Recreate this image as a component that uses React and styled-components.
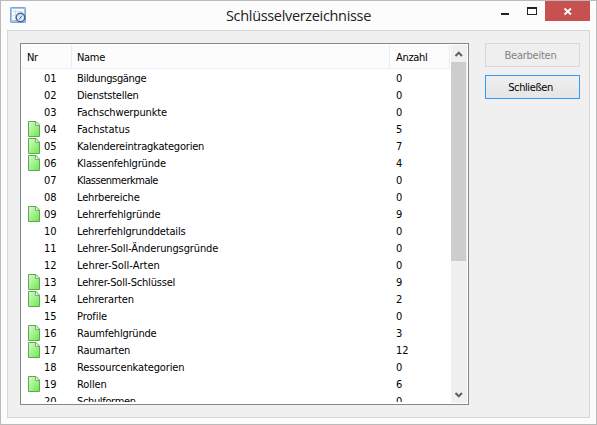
import React from "react";
import styled, { createGlobalStyle } from "styled-components";

const Global = createGlobalStyle`
  * { box-sizing: border-box; }
  body { margin: 0; overflow: hidden; }
`;

const Window = styled.div`
  width: 597px;
  height: 425px;
  display: flex;
  flex-direction: column;
  padding: 0 6px 6px;
  background: #fcfcfc;
  border: 1px solid #bbb;
  color: #000;
  font: 11px/17px "DejaVu Sans Condensed", "DejaVu Sans", sans-serif;
  font-stretch: condensed;
`;

const TitleBar = styled.header`
  height: 29px;
  flex: none;
  display: grid;
  grid-template-columns: 106px 1fr 106px;
`;

const AppIcon = styled.svg`
  width: 16px;
  height: 16px;
  margin: 6px 0 0 3px;
`;

const Title = styled.h1`
  margin: 0;
  padding-top: 4px;
  text-align: center;
  font: 400 14.5px/21px "Open Sans", sans-serif;
  letter-spacing: -0.33px;
  color: #222;
`;

const Controls = styled.div`
  display: flex;
  align-items: flex-start;
  justify-content: flex-end;
`;

const Control = styled.button`
  width: ${(p) => (p.$close ? 45 : 27)}px;
  height: 20px;
  padding: 0;
  border: 0;
  display: flex;
  background: ${(p) => (p.$close ? "#c75050" : "transparent")};
`;

const Client = styled.main`
  flex: 1;
  min-height: 0;
  display: flex;
  gap: 16px;
  padding: 12px 9px 12px 12px;
  background: #f0f0f0;
  border: 1px solid #d6d6d6;
`;

const ListBox = styled.section`
  width: 449px;
  height: 362px;
  display: flex;
  padding: 1px;
  background: #fff;
  border: 1px solid #828790;
`;

const Table = styled.div`
  flex: 1;
  height: 357px;
  overflow: hidden;
`;

const HeaderRow = styled.div`
  height: 24px;
  width: 428px;
  display: grid;
  grid-template-columns: 50px 318px 60px;
  background: #fcfcfc;
  border-bottom: 1px solid #e5effa;
`;

const HeaderCell = styled.div`
  padding: 4px 0 0 ${(p) => p.$inset || 5}px;
  border-right: 1px solid #e5effa;
  letter-spacing: -0.3px;
`;

const Row = styled.div`
  height: 17px;
  display: grid;
  grid-template-columns: 22px 33px 319px 1fr;
`;

const Rows = styled.div`
  padding-top: 1px;
`;

const IconCell = styled.div`
  padding-left: 6px;
  height: 17px;
  display: flex;
`;

const Cell = styled.span`
  white-space: nowrap;
  letter-spacing: ${(p) => p.$tracking || 0}px;
`;

const Scrollbar = styled.div`
  width: 16px;
  height: 358px;
  display: flex;
  flex-direction: column;
  background: #f0f0f0;
`;

const ScrollButton = styled.button`
  height: 17px;
  padding: 0;
  border: 0;
  display: flex;
  background: transparent;
`;

const Thumb = styled.div`
  width: 15px;
  height: 199px;
  margin-bottom: auto;
  background: #cdcdcd;
`;

const Actions = styled.aside`
  flex: 1;
  display: flex;
  flex-direction: column;
  gap: 8px;
`;

const Button = styled.button`
  height: 24px;
  width: 95px;
  padding: 0 4px 0 0;
  font: inherit;
  letter-spacing: ${(p) => (p.disabled ? -0.25 : -0.4)}px;
  color: ${(p) => (p.disabled ? "#838383" : "#000")};
  border: 1px solid ${(p) => (p.disabled ? "#d9d9d9" : "#3399ff")};
  background: ${(p) => (p.disabled ? "#efefef" : "linear-gradient(#f0f0f0, #e5e5e5)")};
`;

// number, name, count, letter spacing of the name
const entries = [
  ["01", "Bildungsgänge", 0, -0.33],
  ["02", "Dienststellen", 0, -0.25],
  ["03", "Fachschwerpunkte", 0, -0.13],
  ["04", "Fachstatus", 5, 0],
  ["05", "Kalendereintragkategorien", 7, -0.2],
  ["06", "Klassenfehlgründe", 4, -0.18],
  ["07", "Klassenmerkmale", 0, -0.48],
  ["08", "Lehrbereiche", 0, -0.17],
  ["09", "Lehrerfehlgründe", 9, -0.13],
  ["10", "Lehrerfehlgrunddetails", 0, -0.18],
  ["11", "Lehrer-Soll-Änderungsgründe", 0, -0.12],
  ["12", "Lehrer-Soll-Arten", 0, 0],
  ["13", "Lehrer-Soll-Schlüssel", 9, -0.19],
  ["14", "Lehrerarten", 2, -0.1],
  ["15", "Profile", 0, -0.1],
  ["16", "Raumfehlgründe", 3, -0.22],
  ["17", "Raumarten", 12, -0.2],
  ["18", "Ressourcenkategorien", 0, -0.12],
  ["19", "Rollen", 6, -0.1],
  ["20", "Schulformen", 0, -0.35],
];

const PageIcon = () => (
  <svg width="12" height="17" viewBox="0 0 12 17">
    <defs>
      <linearGradient id="page" x1="0" y1="0" x2="1" y2="1">
        <stop offset="0" stopColor="#d9fbd0" />
        <stop offset="1" stopColor="#6be84a" />
      </linearGradient>
    </defs>
    <path d="M.5.5H8L11.5 4V15.5H.5Z" fill="url(#page)" stroke="#62a653" />
    <path d="M7.5 1V4.5H11" fill="#e8f8e4" stroke="#7cae72" />
  </svg>
);

export default function App() {
  return (
    <>
      <Global />
      <Window>
        <TitleBar>
          <AppIcon viewBox="0 0 16 16">
            <rect width="16" height="16" rx="1.5" fill="#79a8da" />
            <rect x="1" y="1" width="14" height="14" fill="#a3c5e9" />
            <path d="M2 2H14V13H2Z" fill="#f7f9fc" />
            <path d="M3 4.5H13M3 8.5H6M5.5 3V12" stroke="#d4dce6" />
            <circle cx="10.5" cy="10.5" r="4.3" fill="#dce7f3" stroke="#456892" strokeWidth="1.5" />
            <path d="M9 12.5L12 8.5" stroke="#456892" />
          </AppIcon>
          <Title>Schlüsselverzeichnisse</Title>
          <Controls>
            <Control aria-label="Minimieren">
              <svg width="27" height="20"><path d="M10 12H18V14H10Z" fill="#222" /></svg>
            </Control>
            <Control aria-label="Maximieren">
              <svg width="27" height="20"><path d="M9 6H19V14H9ZM10 8V13H18V8Z" fillRule="evenodd" fill="#222" /></svg>
            </Control>
            <Control $close aria-label="Fenster schließen">
              <svg width="45" height="20"><path d="M19.5 7.5L26 13.5M26 7.5L19.5 13.5" stroke="#fff" strokeWidth="1.8" /></svg>
            </Control>
          </Controls>
        </TitleBar>
        <Client>
          <ListBox>
            <Table>
              <HeaderRow>
                <HeaderCell>Nr</HeaderCell>
                <HeaderCell>Name</HeaderCell>
                <HeaderCell $inset={6}>Anzahl</HeaderCell>
              </HeaderRow>
              <Rows>
                {entries.map(([nr, name, count, tracking]) => (
                  <Row key={nr}>
                    <IconCell>{count > 0 && <PageIcon />}</IconCell>
                    <Cell>{nr}</Cell>
                    <Cell $tracking={tracking}>{name}</Cell>
                    <Cell>{count}</Cell>
                  </Row>
                ))}
              </Rows>
            </Table>
            <Scrollbar>
              <ScrollButton aria-label="Nach oben">
                <svg width="16" height="17"><path d="M4.5 11L7.75 7.75L11 11" fill="none" stroke="#606060" strokeWidth="2" /></svg>
              </ScrollButton>
              <Thumb />
              <ScrollButton aria-label="Nach unten">
                <svg width="16" height="17"><path d="M4.5 7L7.75 10.25L11 7" fill="none" stroke="#606060" strokeWidth="2" /></svg>
              </ScrollButton>
            </Scrollbar>
          </ListBox>
          <Actions>
            <Button disabled>Bearbeiten</Button>
            <Button>Schließen</Button>
          </Actions>
        </Client>
      </Window>
    </>
  );
}
